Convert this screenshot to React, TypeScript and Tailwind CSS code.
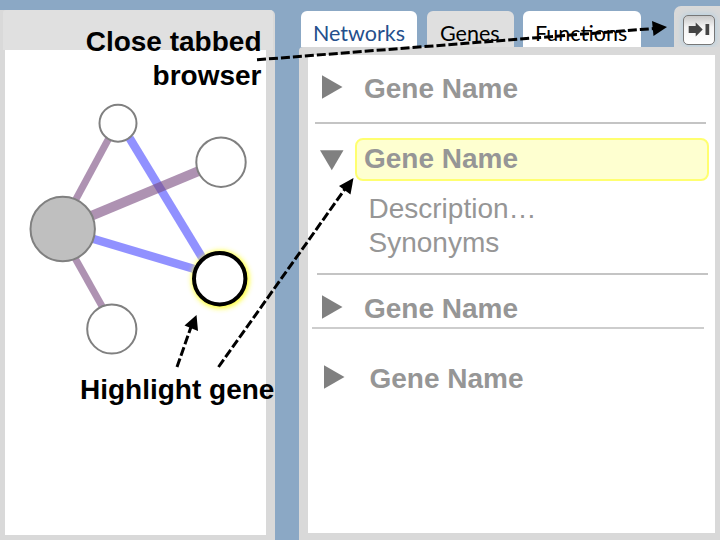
import React from "react";

const SANS = "font-['Liberation_Sans',Arial,sans-serif]";

function GeneNetwork() {
  return (
    <svg className="block h-[485px] w-[261px]" viewBox="5 50 261 485">
      <defs>
        <filter id="glow" x="-50%" y="-50%" width="200%" height="200%">
          <feGaussianBlur stdDeviation="2.8" />
        </filter>
      </defs>
      <g stroke="#0000ff" strokeOpacity="0.43">
        <line x1="129.500" y1="138" x2="203" y2="259" strokeWidth="8.500" />
        <line x1="92" y1="238.500" x2="196" y2="269.500" strokeWidth="8.500" />
      </g>
      <g stroke="#78497f" strokeOpacity="0.6">
        <line x1="109" y1="138" x2="75" y2="201" strokeWidth="7" />
        <line x1="91" y1="216" x2="200" y2="170.500" strokeWidth="10" />
        <line x1="75" y1="258" x2="103" y2="308" strokeWidth="7" />
      </g>
      <g fill="#fff" stroke="#808080" strokeWidth="2">
        <circle cx="118" cy="123.200" r="18.500" />
        <circle cx="221" cy="162.200" r="24.700" />
        <circle cx="111.800" cy="329" r="24.600" />
        <circle cx="62.700" cy="229" r="32.200" fill="#bfbfbf" />
      </g>
      <circle cx="220.500" cy="279.500" r="29" fill="#ffff30" filter="url(#glow)" />
      <circle cx="219.700" cy="278.700" r="25.700" fill="#fff" stroke="#000" strokeWidth="4" />
    </svg>
  );
}

function Arrow({ down = false }: { down?: boolean }) {
  return down ? (
    <svg className="block h-[21px] w-6 shrink-0" viewBox="0 0 24 21">
      <path d="M0 .3H23.500L11.800 20.300Z" fill="#808080" />
    </svg>
  ) : (
    <svg className="mt-[3px] block h-6 w-[21px] shrink-0" viewBox="0 0 21 24">
      <path d="M0 .2V23.800L20.500 12Z" fill="#808080" />
    </svg>
  );
}

const GeneName = () => <span className="text-[28px] leading-[34px] font-bold">Gene Name</span>;

function Tabs() {
  return (
    <div className="flex h-[47px] items-end pl-0.5 font-[Lato,sans-serif] text-[21.500px] leading-[30px] whitespace-nowrap text-black">
      <div className="h-9 w-[116px] rounded-t-[6px] bg-white pt-[7px] pl-3 text-[#254f8c]">Networks</div>
      <div className="ml-2.5 h-9 w-[87px] rounded-t-[6px] bg-[#dfdfdf] pt-[7px] pl-[13px]">Genes</div>
      <div className="ml-[9px] h-9 w-[118px] rounded-t-[6px] bg-white pt-[7px] pl-3">Functions</div>
      <div className="ml-[33px] h-[41px] w-[46px] rounded-tl-[7px] bg-[#d9d9d9] pt-[9px] pl-[8.500px]">
        <div className="flex h-[30px] w-8 items-center justify-center rounded-[5px] border border-[#777] bg-gradient-to-b from-[#c9c9c9] via-[#f4f4f4] via-40% to-white shadow-[0_0_6px_1px_#b4d0e2]">
          <svg className="h-4 w-[22px]" viewBox="0 0 22 16" fill="#444">
            <path d="M.7 4H7.700V.5L14.700 7.500L7.700 14.500V11H.7ZM17.500 2H21.200V13H17.500Z" />
          </svg>
        </div>
      </div>
    </div>
  );
}

export default function App() {
  return (
    <main className={`relative flex h-[540px] w-[720px] overflow-hidden bg-[#8ba8c5] ${SANS}`}>
      <section className="mt-[10px] w-[274.500px] shrink-0 rounded-tr-[5px] bg-[#d9d9d9]">
        <div className="ml-[3px] h-10 w-[270px] rounded-t-[3px] bg-[#e0e0e0]" />
        <div className="ml-[4.500px] h-[485px] w-[261.500px] bg-white">
          <GeneNetwork />
        </div>
      </section>

      <section className="ml-[24.500px] flex w-[421px] shrink-0 flex-col">
        <Tabs />
        <div className="h-[493px] rounded-tl-[4px] bg-[#d9d9d9] pt-2 pl-[8.500px]">
          <div className="h-[478px] w-[407.500px] bg-white text-[#969696]">
            <div className="ml-[7px] flex h-[69px] w-[391px] items-start gap-[21px] border-b-2 border-[#c4c4c4] pt-[17px] pl-[7.500px]">
              <Arrow />
              <GeneName />
            </div>
            <div className="ml-[9px] h-[151px] w-[391px] border-b-2 border-[#c4c4c4] pt-3.5">
              <div className="flex w-[393px] items-start pl-[3.500px]">
                <div className="pt-3">
                  <Arrow down />
                </div>
                <div className="-mr-2 ml-[10.500px] h-[43px] w-[354px] shrink-0 rounded-[8px] border-2 border-[#ffff70] bg-[#feffd0] pt-0.5 pl-[7.500px]">
                  <GeneName />
                </div>
              </div>
              <div className="pt-[11px] pl-[52px] text-[28px] leading-[34px]">
                <p>Description…</p>
                <p>Synonyms</p>
              </div>
            </div>
            <div className="ml-1 flex h-[54px] w-[392px] items-start gap-[21.500px] border-b-2 border-[#cdcdcd] pt-[17px] pl-[10px]">
              <Arrow />
              <GeneName />
            </div>
            <div className="flex items-start gap-[25px] pt-[33px] pl-4">
              <Arrow />
              <GeneName />
            </div>
          </div>
        </div>
      </section>

      <p className="absolute top-[25px] left-[60.500px] w-[201px] text-right text-[28px] leading-[34px] font-bold">
        Close tabbed
        <br />
        browser
      </p>
      <p className="absolute top-[373px] left-[80px] text-[28px] leading-[34px] font-bold whitespace-nowrap">
        Highlight gene
      </p>

      <svg className="pointer-events-none absolute inset-0 h-[540px] w-[720px]" viewBox="0 0 720 540">
        <g stroke="#000" strokeWidth="3" strokeDasharray="9 3" fill="none">
          <path d="M257 59.800L654 28.500" />
          <path d="M177 367L191 327" />
          <path d="M218.500 367L345 189" />
        </g>
        <path d="M652 21L667 27L653.500 36Z" />
        <path d="M184.500 325.500L196.500 315L198 331Z" />
        <path d="M339 186L353.500 178L350.500 194.500Z" />
      </svg>
    </main>
  );
}
